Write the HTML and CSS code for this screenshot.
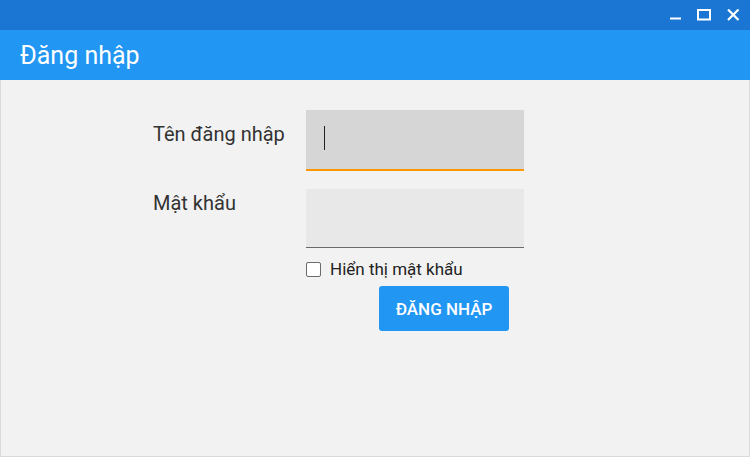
FILE: index.html
```html
<!DOCTYPE html>
<html lang="vi">
<head>
<meta charset="utf-8">
<title>Đăng nhập</title>
<link rel="stylesheet" href="styles.css">
</head>
<body>
<div class="window">
  <div class="titlebar">
    <button class="win-btn" aria-label="Minimize">
      <svg width="12" height="12" viewBox="0 0 12 12"><rect x="0" y="8.5" width="11" height="2" fill="#fff"/></svg>
    </button>
    <button class="win-btn" aria-label="Maximize">
      <svg width="15" height="12" viewBox="0 0 15 12"><rect x="1" y="1" width="12" height="9.5" fill="none" stroke="#fff" stroke-width="2"/></svg>
    </button>
    <button class="win-btn" aria-label="Close">
      <svg width="13" height="12" viewBox="0 0 13 12"><path d="M1 0.5 L11.5 11 M11.5 0.5 L1 11" stroke="#fff" stroke-width="2.2"/></svg>
    </button>
  </div>
  <header class="appbar">Đăng nhập</header>
  <main class="content">
    <form class="form">
      <label class="label label-user" for="user">Tên đăng nhập</label>
      <div class="field field-focus"><span class="caret"></span><input id="user" class="input" type="text"></div>
      <label class="label label-pass" for="pass">Mật khẩu</label>
      <div class="field field-idle"><input id="pass" class="input" type="password"></div>
      <div class="extras">
        <label class="check"><span class="box"></span>Hiển thị mật khẩu</label>
        <button type="button" class="submit">ĐĂNG NHẬP</button>
      </div>
    </form>
  </main>
</div>
</body>
</html>
```
FILE: styles.css
```css
html, body { margin: 0; padding: 0; }
body {
  width: 750px;
  height: 457px;
  font-family: Roboto, "Noto Sans", sans-serif;
  background: #f2f2f2;
  overflow: hidden;
}
.window {
  display: flex;
  flex-direction: column;
  height: 457px;
}
.titlebar {
  height: 30px;
  background: #1a76d2;
  display: flex;
  justify-content: flex-end;
  align-items: flex-start;
  padding-right: 2px;
}
.win-btn {
  border: 0;
  background: transparent;
  padding: 9px 0 0;
  margin: 0;
  width: 29px;
  height: 30px;
  display: flex;
  align-items: flex-start;
  justify-content: center;
}
.appbar {
  height: 50px;
  background: #2196f3;
  color: #fff;
  font-size: 25px;
  line-height: 49px;
  padding-top: 1px;
  padding-left: 20px;
  box-sizing: border-box;
}
.content {
  flex: 1;
  border: 1px solid #dadada;
  border-top: 0;
  background: #f2f2f2;
  padding-top: 30px;
  padding-left: 152px;
}
.form {
  display: grid;
  grid-template-columns: 153px 218px;
}
.label {
  font-size: 20px;
  line-height: 23px;
  color: #333;
  align-self: start;
}
.label-user { padding-top: 13px; }
.label-pass { padding-top: 3px; margin-top: 18px; }
.field {
  position: relative;
  box-sizing: border-box;
}
.field-focus {
  height: 61px;
  background: #d6d6d6;
  border-bottom: 2px solid #ff9800;
}
.field-idle {
  height: 59px;
  background: #e8e8e8;
  border-bottom: 1px solid #6a6a6a;
  margin-top: 18px;
}
.input {
  border: 0;
  background: transparent;
  width: 100%;
  height: 100%;
  outline: none;
  padding: 0;
}
.caret {
  position: absolute;
  left: 18px;
  top: 16px;
  width: 1px;
  height: 24px;
  background: #222;
}
.extras {
  grid-column: 2;
  display: flex;
  flex-direction: column;
  align-items: flex-start;
  padding-top: 11px;
}
.check {
  display: flex;
  align-items: center;
  font-size: 17px;
  line-height: 20px;
  color: #222;
  gap: 9px;
}
.box {
  width: 13px;
  height: 13px;
  border: 1.5px solid #6b6b6b;
  border-radius: 2px;
  background: #fff;
}
.submit {
  margin-top: 7px;
  margin-left: 73px;
  width: 130px;
  height: 45px;
  border: 0;
  border-radius: 3px;
  background: #2196f3;
  color: #fff;
  font-family: Roboto, "Noto Sans", sans-serif;
  font-weight: 500;
  font-size: 17px;
  padding: 0;
}
```
